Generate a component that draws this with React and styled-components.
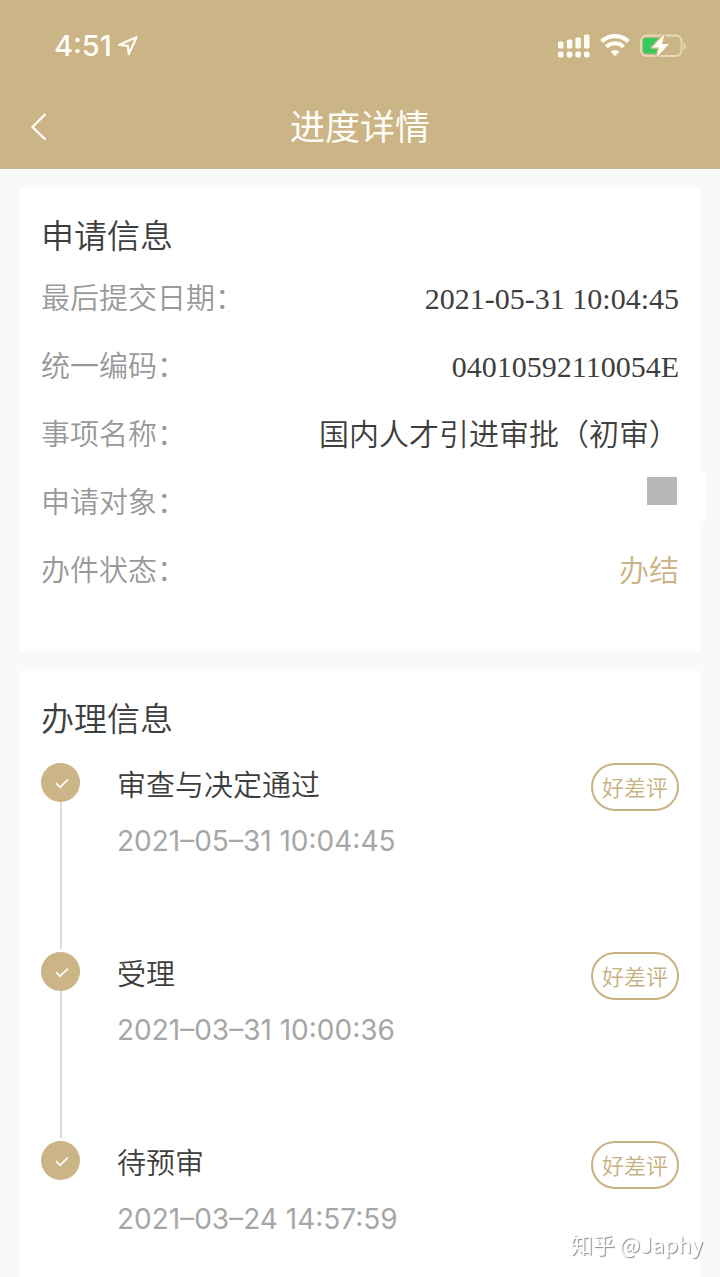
import React from "react"
import styled, { createGlobalStyle } from "styled-components"

const GlobalStyle = createGlobalStyle`
  * {
    box-sizing: border-box;
  }
  body {
    margin: 0;
    background: #f9f9f9;
    color: #3e3e3e;
    font-family: "Noto Sans CJK SC", sans-serif;
    font-weight: 350;
  }
  h1, h2, h3, dl, dd, dt, ol {
    margin: 0;
    padding: 0;
    font-weight: inherit;
  }
`

const Page = styled.div`
  display: flex;
  flex-direction: column;
  min-height: 100vh;
`

const Header = styled.header`
  background: #cbb486;
  border-bottom: 1px solid #c4b594;
  color: #fffdf6;
`

const StatusBar = styled.div`
  display: flex;
  justify-content: space-between;
  align-items: center;
  height: 84px;
  padding: 8px 34px 0 54px;
`

const Clock = styled.div`
  display: flex;
  align-items: center;
  gap: 6px;
  font: 500 29px/36px Inter, sans-serif;
`

const StatusIcons = styled.div`
  display: flex;
  align-items: center;
  gap: 10px;
`

const NavBar = styled.nav`
  display: grid;
  grid-template-columns: 80px 1fr 80px;
  align-items: center;
  height: 84px;
`

const BackButton = styled.button`
  display: flex;
  padding: 0 0 0 30px;
  border: none;
  background: none;
  color: inherit;
`

const Title = styled.h1`
  padding-bottom: 2px;
  font-size: 35px;
  font-weight: 400;
  line-height: 48px;
  text-align: center;
`

const Main = styled.main`
  flex: 1;
  display: flex;
  flex-direction: column;
  gap: 20px;
  padding: 19px 20px 0;
`

const Card = styled.section`
  flex-grow: ${({ $grow }) => ($grow ? 1 : 0)};
  padding: 22px 21px ${({ $grow }) => ($grow ? "0" : "47px")};
  background: #fff;
`

const CardTitle = styled.h2`
  font-size: 33px;
  line-height: 48px;
`

const InfoList = styled.dl`
  padding-top: 6px;
`

const InfoRow = styled.div`
  display: flex;
  justify-content: space-between;
  align-items: baseline;
  height: 68px;
  padding-top: 12px;
  font-size: 29px;
  line-height: 40px;
`

const Label = styled.dt`
  color: #999;
`

const Value = styled.dd`
  align-self: ${({ $top }) => ($top ? "flex-start" : "baseline")};
  font-family: "Liberation Serif", "Noto Sans CJK SC", serif;
  font-size: 30px;
  color: ${({ $accent }) => ($accent ? "#cbb486" : "inherit")};
`

// white patch that runs a little past the card edge
const Masked = styled.span`
  display: block;
  margin: -7px -26px 0 0;
  padding: 4px 28px 16px;
  background: #fff;
  &::before {
    content: "";
    display: block;
    width: 30px;
    height: 28px;
    background: #b8b8b8;
  }
`

const Timeline = styled.ol`
  padding-top: 22px;
  list-style: none;
`

const Step = styled.li`
  display: grid;
  grid-template-columns: 39px 1fr auto;
  column-gap: 37px;
  align-items: start;
  height: ${({ $last }) => ($last ? "116px" : "189px")};
`

const Rail = styled.div`
  display: flex;
  flex-direction: column;
  align-items: center;
  height: 100%;
  padding-bottom: 3px;
`

const Dot = styled.span`
  display: flex;
  align-items: center;
  justify-content: center;
  width: 39px;
  height: 39px;
  border-radius: 50%;
  background: #cbb486;
`

const Line = styled.span`
  flex: 1;
  width: 2px;
  background: #dfddd2;
`

const StepName = styled.h3`
  font-size: 29px;
  line-height: 40px;
`

const StepTime = styled.time`
  display: block;
  margin-top: 20px;
  color: #a6a6a6;
  font: 400 28px/36px Inter, sans-serif;
`

const RateButton = styled.button`
  width: 88px;
  height: 48px;
  padding: 0 0 3px;
  border: 2px solid #c8b283;
  border-radius: 24px;
  background: #fff;
  color: #c8b283;
  font: 350 22px/32px "Noto Sans CJK SC", sans-serif;
`

const Watermark = styled.div`
  position: fixed;
  right: 17px;
  bottom: 18px;
  color: #fff;
  font: 400 22px/32px "Noto Sans CJK SC", sans-serif;
  text-shadow: 1px 1px 1px #888;
`

const info = [
  { label: "最后提交日期", value: "2021-05-31 10:04:45" },
  { label: "统一编码", value: "04010592110054E" },
  { label: "事项名称", value: "国内人才引进审批（初审）" },
  { label: "申请对象", value: <Masked />, top: true },
  { label: "办件状态", value: "办结", accent: true },
]

const steps = [
  { name: "审查与决定通过", time: "2021–05–31 10:04:45" },
  { name: "受理", time: "2021–03–31 10:00:36" },
  { name: "待预审", time: "2021–03–24 14:57:59" },
]

const LocationIcon = () => (
  <svg width="20" height="20" viewBox="0 0 20 20" fill="none">
    <path
      d="M18.5 1.2 1.2 8.8l8.6 1 .9 8.4L18.5 1.2Z"
      stroke="currentColor"
      strokeWidth="2.2"
      strokeLinejoin="round"
    />
  </svg>
)

const SignalIcon = () => (
  <svg width="32" height="24" viewBox="0 0 32 24" fill="currentColor">
    <rect x="0" y="7.5" width="5.5" height="7" rx="1.5" />
    <rect x="8.8" y="5.5" width="5.5" height="9" rx="1.5" />
    <rect x="17.4" y="3.5" width="5.5" height="11" rx="1.5" />
    <rect x="26" y="0.5" width="5.5" height="14" rx="1.5" />
    {[0, 8.8, 17.4, 26].map(x => (
      <rect key={x} x={x} y="17.5" width="5.5" height="6" rx="1.8" />
    ))}
  </svg>
)

const WifiIcon = () => (
  <svg width="30" height="24" viewBox="0 0 30 24" fill="none">
    <path d="M1.6 7.6a19 19 0 0 1 26.8 0" stroke="currentColor" strokeWidth="4.2" />
    <path d="M6.4 12.9a12.2 12.2 0 0 1 17.2 0" stroke="currentColor" strokeWidth="4" />
    <path d="M10.6 17.8a6.3 6.3 0 0 1 8.8 0L15 22.2Z" fill="currentColor" />
  </svg>
)

const BatteryIcon = () => (
  <svg width="46" height="26" viewBox="0 0 46 26">
    <rect x="1" y="2.5" width="40.5" height="20.5" rx="5.5" fill="none" stroke="#e6d9bd" strokeWidth="1.8" />
    <path d="M43.5 9.5c3 1 3 6 0 7Z" fill="#e6d9bd" />
    <rect x="3" y="5" width="17" height="15.5" rx="3" fill="#35cb59" />
    <path
      d="M24.5 1 12 14.5h7L16.5 24.5 29 11h-7Z"
      fill="#fffef8"
      stroke="#cbb486"
      strokeWidth="3"
      paintOrder="stroke"
      strokeLinejoin="round"
    />
  </svg>
)

const BackIcon = () => (
  <svg width="18" height="28" viewBox="0 0 18 28" fill="none">
    <path d="M15.5 2 2.5 15l13 12.5" stroke="currentColor" strokeWidth="2.4" />
  </svg>
)

const CheckIcon = () => (
  <svg width="39" height="39" viewBox="0 0 39 39" fill="none">
    <path d="m15 20.2 4.2 4 7.6-7.6" stroke="#fffaf0" strokeWidth="1.8" />
  </svg>
)

const App = () => (
  <>
    <GlobalStyle />
    <Page>
      <Header>
        <StatusBar>
          <Clock>
            4:51
            <LocationIcon />
          </Clock>
          <StatusIcons>
            <SignalIcon />
            <WifiIcon />
            <BatteryIcon />
          </StatusIcons>
        </StatusBar>
        <NavBar>
          <BackButton type="button" aria-label="返回">
            <BackIcon />
          </BackButton>
          <Title>进度详情</Title>
        </NavBar>
      </Header>

      <Main>
        <Card>
          <CardTitle>申请信息</CardTitle>
          <InfoList>
            {info.map(({ label, value, accent, top }) => (
              <InfoRow key={label}>
                <Label>{label}：</Label>
                <Value $accent={accent} $top={top}>
                  {value}
                </Value>
              </InfoRow>
            ))}
          </InfoList>
        </Card>

        <Card $grow>
          <CardTitle>办理信息</CardTitle>
          <Timeline>
            {steps.map(({ name, time }, i) => {
              const isLast = i === steps.length - 1
              return (
                <Step key={name} $last={isLast}>
                  <Rail>
                    <Dot>
                      <CheckIcon />
                    </Dot>
                    {!isLast && <Line />}
                  </Rail>
                  <div>
                    <StepName>{name}</StepName>
                    <StepTime>{time}</StepTime>
                  </div>
                  <RateButton type="button">好差评</RateButton>
                </Step>
              )
            })}
          </Timeline>
        </Card>
      </Main>
    </Page>
    <Watermark>知乎 @Japhy</Watermark>
  </>
)

export default App
